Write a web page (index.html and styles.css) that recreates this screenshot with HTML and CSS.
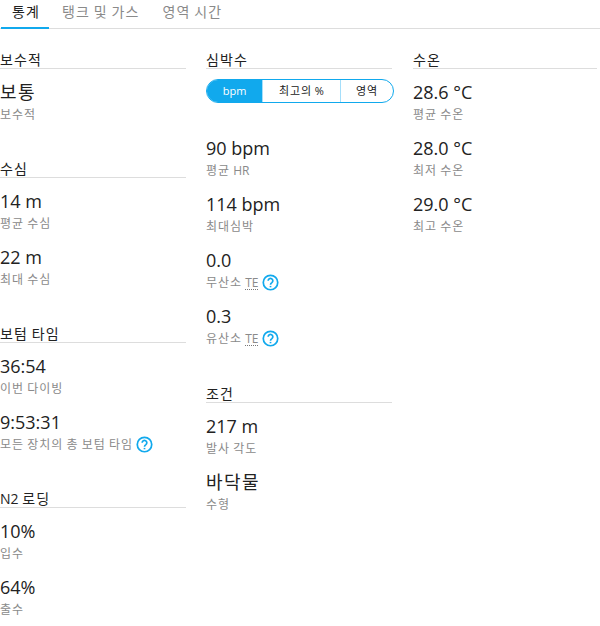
FILE: index.html
```html
<!DOCTYPE html>
<html lang="ko">
<head>
<meta charset="utf-8">
<title>통계</title>
<link rel="stylesheet" href="styles.css">
</head>
<body>
<nav class="tabs">
  <a class="tab active ko">통계</a>
  <a class="tab ko">탱크 및 가스</a>
  <a class="tab ko">영역 시간</a>
</nav>
<main class="grid">
  <div class="col">
    <section class="section">
      <h3 class="title ko">보수적</h3>
      <div class="item"><div class="value ko">보통</div><div class="label ko">보수적</div></div>
    </section>
    <section class="section">
      <h3 class="title ko">수심</h3>
      <div class="item"><div class="value">14 m</div><div class="label ko">평균 수심</div></div>
      <div class="item"><div class="value">22 m</div><div class="label ko">최대 수심</div></div>
    </section>
    <section class="section">
      <h3 class="title ko">보텀 타임</h3>
      <div class="item"><div class="value">36:54</div><div class="label ko">이번 다이빙</div></div>
      <div class="item"><div class="value">9:53:31</div><div class="label ko">모든 장치의 총 보텀 타임 <svg class="help" viewBox="0 0 16 16"><circle cx="8" cy="8" r="6.8"/><path d="M5.8 6.3a2.2 2.2 0 1 1 3.5 1.8c-.9.6-1.3 1-1.3 2"/><path d="M8 11.2v1.3"/></svg></div></div>
    </section>
    <section class="section">
      <h3 class="title">N2 <span class="ko">로딩</span></h3>
      <div class="item"><div class="value">10%</div><div class="label ko">입수</div></div>
      <div class="item"><div class="value">64%</div><div class="label ko">출수</div></div>
    </section>
  </div>
  <div class="col">
    <section class="section section-heart">
      <h3 class="title ko">심박수</h3>
      <div class="toggle">
        <span class="seg on">bpm</span>
        <span class="seg mid"><span class="ko">최고의</span> %</span>
        <span class="seg end ko">영역</span>
      </div>
      <div class="item"><div class="value">90 bpm</div><div class="label"><span class="ko">평균</span> HR</div></div>
      <div class="item"><div class="value">114 bpm</div><div class="label ko">최대심박</div></div>
      <div class="item"><div class="value">0.0</div><div class="label"><span class="ko">무산소</span> <span class="abbr">TE</span> <svg class="help" viewBox="0 0 16 16"><circle cx="8" cy="8" r="6.8"/><path d="M5.8 6.3a2.2 2.2 0 1 1 3.5 1.8c-.9.6-1.3 1-1.3 2"/><path d="M8 11.2v1.3"/></svg></div></div>
      <div class="item"><div class="value">0.3</div><div class="label"><span class="ko">유산소</span> <span class="abbr">TE</span> <svg class="help" viewBox="0 0 16 16"><circle cx="8" cy="8" r="6.8"/><path d="M5.8 6.3a2.2 2.2 0 1 1 3.5 1.8c-.9.6-1.3 1-1.3 2"/><path d="M8 11.2v1.3"/></svg></div></div>
    </section>
    <section class="section">
      <h3 class="title ko">조건</h3>
      <div class="item"><div class="value">217 m</div><div class="label ko">발사 각도</div></div>
      <div class="item"><div class="value ko">바닥물</div><div class="label ko">수형</div></div>
    </section>
  </div>
  <div class="col">
    <section class="section">
      <h3 class="title ko">수온</h3>
      <div class="item"><div class="value">28.6 °C</div><div class="label ko">평균 수온</div></div>
      <div class="item"><div class="value">28.0 °C</div><div class="label ko">최저 수온</div></div>
      <div class="item"><div class="value">29.0 °C</div><div class="label ko">최고 수온</div></div>
    </section>
  </div>
</main>
</body>
</html>
```
FILE: styles.css
```css
* { box-sizing: border-box; }
html, body { margin: 0; padding: 0; background: #fff; }
body {
  font-family: "Open Sans", "Noto Sans CJK KR", sans-serif;
  color: #222;
  overflow: hidden;
  height: 626px;
}
.ko { letter-spacing: .08em; word-spacing: -.07em; }
.tabs {
  display: flex;
  height: 29px;
  padding-left: 1px;
  border-bottom: 1px solid #ddd;
}
.tab {
  height: 29px;
  padding: 0 11px;
  margin-right: 1px;
  font-size: 14px;
  line-height: 23px;
  color: #8a8a8a;
  white-space: nowrap;
}
.tab.active {
  width: 48px;
  margin-right: 2px;
  color: #222;
  border-bottom: 2px solid #11a9ed;
}
.grid {
  display: grid;
  grid-template-columns: 186px 186px 185px;
  column-gap: 20px;
  padding-top: 22px;
}
.col:last-child { margin-left: 1px; }
.section { margin-bottom: 25px; }
.section-heart { margin-bottom: 26px; }
.section:last-child { margin-bottom: 0; }
.title {
  margin: 0 0 10px;
  height: 18px;
  font-size: 14px;
  font-weight: 400;
  line-height: 18px;
  color: #222;
  border-bottom: 1px solid #ddd;
}
.item { height: 56px; }
.value {
  height: 26px;
  font-size: 18px;
  line-height: 26px;
  color: #222;
}
.label {
  height: 18px;
  padding-top: 1px;
  font-size: 12px;
  line-height: 18px;
  color: #8a8a8a;
  white-space: nowrap;
}
.abbr { border-bottom: 1px dotted #777; display: inline-block; line-height: 13px; }
.help {
  width: 17px;
  height: 17px;
  vertical-align: -4px;
  fill: none;
  stroke: #11a9ed;
  stroke-width: 1.6;
}
.toggle {
  display: flex;
  width: 188px;
  height: 24px;
  margin: 2px 0 32px;
  border: 1px solid #11a9ed;
  border-radius: 12px;
  overflow: hidden;
  font-size: 11px;
  line-height: 22px;
  text-align: center;
  color: #222;
}
.seg { display: block; }
.seg.on { width: 55px; background: #11a9ed; color: #fff; }
.seg.mid { width: 79px; border-left: 1px solid #a5defa; border-right: 1px solid #a5defa; }
.seg.end { flex: 1; }
```
